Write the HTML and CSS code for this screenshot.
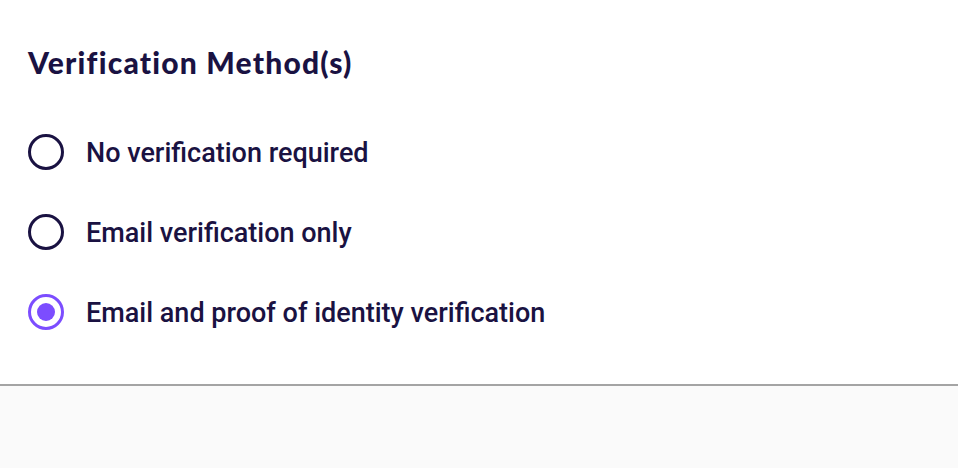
FILE: index.html
```html
<!DOCTYPE html>
<html lang="en">
<head>
  <link rel="stylesheet" href="styles.css">
</head>
<body>
  <div class="card">
    <h2 class="card-title">Verification Method(s)</h2>
    <div class="radio-group">
      <label class="radio-option">
        <input type="radio" name="verification" value="none">
        <span class="radio-mark"></span>
        <span class="radio-label">No verification required</span>
      </label>
      <label class="radio-option">
        <input type="radio" name="verification" value="email">
        <span class="radio-mark"></span>
        <span class="radio-label">Email verification only</span>
      </label>
      <label class="radio-option">
        <input type="radio" name="verification" value="identity" checked>
        <span class="radio-mark"></span>
        <span class="radio-label">Email and proof of identity verification</span>
      </label>
    </div>
  </div>
</body>
</html>
```
FILE: styles.css
```css
:root {
  --ink: #1a1242;
  --accent: #7c4dff;
  --page-bg: #fafafa;
}

* {
  box-sizing: border-box;
}

body {
  margin: 0;
  background-color: var(--page-bg);
  color: var(--ink);
  font-family: Roboto, "Liberation Sans", sans-serif;
}

.card {
  background-color: #fff;
  padding: 40px 28px 32px;
  height: 386px;
  border-bottom: 2px solid #a4a4a4;
  box-shadow: 0 2px 4px rgba(0, 0, 0, 0.1);
}

.card-title {
  margin: 0 0 50px;
  font-family: Lato, "Noto Sans", sans-serif;
  font-weight: 900;
  font-size: 30px;
  line-height: 44px;
  letter-spacing: 1.2px;
}

.radio-group {
  display: flex;
  flex-direction: column;
  gap: 44px;
}

.radio-option {
  display: flex;
  align-items: center;
  gap: 22px;
  height: 36px;
  cursor: pointer;
}

.radio-option input {
  display: none;
}

.radio-mark {
  width: 36px;
  height: 36px;
  border: 3px solid var(--ink);
  border-radius: 50%;
  display: flex;
  align-items: center;
  justify-content: center;
  flex-shrink: 0;
}

input:checked + .radio-mark {
  border-color: var(--accent);
}

input:checked + .radio-mark::after {
  content: '';
  width: 18px;
  height: 18px;
  border-radius: 50%;
  background-color: var(--accent);
}

.radio-label {
  font-size: 27px;
  font-weight: 500;
  padding-top: 2px;
}
```
